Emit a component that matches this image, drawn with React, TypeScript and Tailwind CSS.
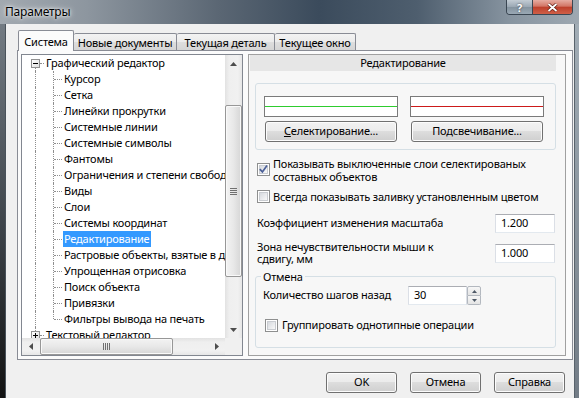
import React from 'react';

const CHILDREN = [
  'Курсор',
  'Сетка',
  'Линейки прокрутки',
  'Системные линии',
  'Системные символы',
  'Фантомы',
  'Ограничения и степени свободы',
  'Виды',
  'Слои',
  'Системы координат',
  'Редактирование',
  'Растровые объекты, взятые в документ',
  'Упрощенная отрисовка',
  'Поиск объекта',
  'Привязки',
  'Фильтры вывода на печать',
];

const dot = 'border-dotted border-[#8f8f8f]';
const btn =
  'flex items-center justify-center whitespace-nowrap rounded-[3px] border border-[#707070] bg-[linear-gradient(to_bottom,#f2f2f2_0%,#ebebeb_50%,#dddddd_50%,#cfcfcf_100%)] shadow-[inset_0_0_0_1px_#fcfcfc]';
const field =
  'flex items-center border border-[#abadb3] border-x-[#dbdfe6] border-b-[#e3e9ef] bg-white pl-[5px]';

function Arrow({ dir }: { dir: 'up' | 'down' | 'left' | 'right' }) {
  if (dir === 'up' || dir === 'down') {
    return (
      <svg width="7" height="4" viewBox="0 0 7 4">
        <path d={dir === 'up' ? 'M0 4L3.5 0L7 4Z' : 'M0 0L3.5 4L7 0Z'} fill="#4d4d4d" />
      </svg>
    );
  }
  return (
    <svg width="4" height="7" viewBox="0 0 4 7">
      <path d={dir === 'left' ? 'M4 0L0 3.5L4 7Z' : 'M0 0L4 3.5L0 7Z'} fill="#4d4d4d" />
    </svg>
  );
}

function ExpandBox({ open }: { open: boolean }) {
  return (
    <div className="flex h-[9px] w-[9px] shrink-0 items-center justify-center border border-[#919191] bg-[linear-gradient(135deg,#ffffff,#dedede)]">
      <svg width="7" height="7" viewBox="0 0 7 7">
        <rect x="1" y="3" width="5" height="1" fill="#000" />
        {!open && <rect x="3" y="1" width="1" height="5" fill="#000" />}
      </svg>
    </div>
  );
}

function CheckBox({ checked }: { checked?: boolean }) {
  return (
    <div className="flex h-[13px] w-[13px] shrink-0 items-center justify-center border border-[#8e8f8f] bg-white">
      <div className="relative flex h-[9px] w-[9px] items-center justify-center border border-[#c9ccd1] bg-[linear-gradient(135deg,#d6d9de,#f9f9f9)]">
        {checked && (
          <svg width="9" height="9" viewBox="0 0 9 9" className="overflow-visible">
            <path d="M0.8 4.2L3.4 6.9L8 0.6" fill="none" stroke="#4a5f97" strokeWidth="1.7" />
          </svg>
        )}
      </div>
    </div>
  );
}

function RootRow({ label, open, above, below }: { label: string; open: boolean; above?: boolean; below?: boolean }) {
  return (
    <div className="flex h-4 items-stretch">
      <div className="flex w-[22px] shrink-0 pl-[9px]">
        <div className="flex w-[9px] flex-col items-center">
          <div className={`h-[4px] ${above ? `border-l ${dot}` : ''}`} />
          <ExpandBox open={open} />
          <div className={`flex-1 ${below ? `border-l ${dot}` : ''}`} />
        </div>
        <div className={`mt-2 h-0 w-[4px] border-t ${dot}`} />
      </div>
      <div className="ml-px flex items-center whitespace-nowrap pl-px">{label}</div>
    </div>
  );
}

function ChildRow({ label, last, selected }: { label: string; last?: boolean; selected?: boolean }) {
  return (
    <div className="flex h-4 items-stretch">
      <div className="flex w-[22px] shrink-0 pl-[13px]">
        <div className={`border-l ${dot}`} />
      </div>
      <div className="flex w-[18px] shrink-0 pl-[9px]">
        <div className={`${last ? 'h-2' : 'h-full'} border-l ${dot}`} />
        <div className={`mt-2 h-0 w-[8px] border-t ${dot}`} />
      </div>
      <div
        className={`ml-px flex items-center whitespace-nowrap pl-px pr-[2px] ${selected ? 'bg-[#3399ff] text-white' : ''}`}
      >
        {label}
      </div>
    </div>
  );
}

function Tree() {
  return (
    <div className="flex h-[302px] w-[222px] shrink-0 flex-col border border-[#828790] bg-white">
      <div className="flex h-[283px]">
        <div className="w-[203px] overflow-hidden">
          <RootRow label="Графический редактор" open below />
          {CHILDREN.map((c, i) => (
            <ChildRow key={c} label={c} last={i === CHILDREN.length - 1} selected={c === 'Редактирование'} />
          ))}
          <RootRow label="Текстовый редактор" open={false} above />
        </div>
        {/* вертикальная прокрутка */}
        <div className="flex w-[17px] shrink-0 flex-col bg-[linear-gradient(to_right,#e2e2e2,#efefef_25%,#f1f1f1_75%,#e6e6e6)]">
          <div className="flex h-[17px] items-center justify-center">
            <Arrow dir="up" />
          </div>
          <div className="h-[33px]" />
          <div className="flex h-[172px] flex-col items-center justify-center gap-px rounded-[2px] border border-[#979797] bg-[linear-gradient(to_right,#f3f3f3,#e8e8e8_50%,#d6d6d6)] shadow-[inset_0_0_0_1px_#f9f9f9]">
            <div className="h-px w-[7px] bg-[#707070]" />
            <div className="h-px w-[7px] bg-[#707070]" />
            <div className="h-px w-[7px] bg-[#707070]" />
            <div className="h-px w-[7px] bg-[#707070]" />
          </div>
          <div className="flex-1" />
          <div className="flex h-[17px] items-center justify-center">
            <Arrow dir="down" />
          </div>
        </div>
      </div>
      {/* горизонтальная прокрутка */}
      <div className="flex h-[17px]">
        <div className="flex w-[203px] bg-[linear-gradient(to_bottom,#e2e2e2,#efefef_25%,#f1f1f1_75%,#e6e6e6)]">
          <div className="flex w-[17px] items-center justify-center">
            <Arrow dir="left" />
          </div>
          <div className="ml-px flex w-[133px] items-center justify-center gap-px rounded-[2px] border border-[#979797] bg-[linear-gradient(to_bottom,#f3f3f3,#e8e8e8_50%,#d6d6d6)] shadow-[inset_0_0_0_1px_#f9f9f9]">
            <div className="h-[7px] w-px bg-[#707070]" />
            <div className="h-[7px] w-px bg-[#707070]" />
            <div className="h-[7px] w-px bg-[#707070]" />
            <div className="h-[7px] w-px bg-[#707070]" />
          </div>
          <div className="flex-1" />
          <div className="flex w-[17px] items-center justify-center">
            <Arrow dir="right" />
          </div>
        </div>
        <div className="w-[17px] bg-[#f0f0f0]" />
      </div>
    </div>
  );
}

function EditPanel() {
  return (
    <div className="flex h-[302px] w-[318px] shrink-0 flex-col whitespace-nowrap border border-[#a0a0a0] bg-[#f7f7f7]">
      <div className="ml-px mr-[9px] flex h-4 items-center justify-center bg-[#e6e6e6]">Редактирование</div>

      {/* цвета */}
      <div className="ml-[6px] mt-[12px] flex w-[301px] gap-[12px] rounded-[3px] border border-[#d5dfe5] pb-[7px] pl-[8px] pt-[12px]">
        <div className="flex w-[134px] flex-col items-center">
          <div className="flex h-[21px] w-full items-center border border-[#7a7a7a] bg-white">
            <div className="h-px w-full bg-[#2ecc2e]" />
          </div>
          <div className={`${btn} mt-[4px] h-[21px] w-[132px]`}>
            <span>
              <span className="underline">С</span>електирование...
            </span>
          </div>
        </div>
        <div className="flex w-[134px] flex-col items-center">
          <div className="flex h-[21px] w-full items-center border border-[#7a7a7a] bg-white">
            <div className="h-px w-full bg-[#cc1a1a]" />
          </div>
          <div className={`${btn} mt-[4px] h-[21px] w-[132px]`}>Подсвечивание...</div>
        </div>
      </div>

      <div className="ml-[8px] mt-[7px] flex gap-[3px] leading-[13px]">
        <div className="mt-[6px]">
          <CheckBox checked />
        </div>
        <div>
          Показывать выключенные слои селектированых
          <br />
          составных объектов
        </div>
      </div>

      <div className="ml-[8px] mt-[7px] flex items-center gap-[3px] leading-[13px]">
        <CheckBox />
        <div>Всегда показывать заливку установленным цветом</div>
      </div>

      <div className="mt-[11px] flex items-center justify-between pl-[8px] pr-[10px]">
        <div>Коэффициент изменения масштаба</div>
        <div className={`${field} h-[19px] w-[60px]`}>1.200</div>
      </div>

      <div className="mt-[8px] flex items-center justify-between pl-[8px] pr-[10px]">
        <div className="leading-[12px]">
          Зона нечувствительности мыши к
          <br />
          сдвигу, мм
        </div>
        <div className={`${field} h-[19px] w-[60px]`}>1.000</div>
      </div>

      <fieldset className="ml-[6px] mt-[4px] w-[301px] rounded-[3px] border border-[#d5dfe5] pb-[13px]">
        <legend className="ml-[5px] px-[2px] leading-[15px]">Отмена</legend>
        <div className="mt-[2px] flex h-[19px] items-center pl-[7px]">
          <div className="w-[145px]">Количество шагов назад</div>
          <div className={`${field} h-[19px] w-[59px]`}>30</div>
          <div className="flex h-[19px] w-[14px] flex-col">
            <div className="flex flex-1 items-center justify-center rounded-t-[2px] border border-[#b3b8bf] bg-[linear-gradient(to_bottom,#f7f7f7,#e4e4e4)]">
              <svg width="5" height="3" viewBox="0 0 5 3">
                <path d="M0 3L2.5 0L5 3Z" fill="#4d5866" />
              </svg>
            </div>
            <div className="flex flex-1 items-center justify-center rounded-b-[2px] border border-t-0 border-[#b3b8bf] bg-[linear-gradient(to_bottom,#f7f7f7,#e4e4e4)]">
              <svg width="5" height="3" viewBox="0 0 5 3">
                <path d="M0 0L2.5 3L5 0Z" fill="#4d5866" />
              </svg>
            </div>
          </div>
        </div>
        <div className="ml-[9px] mt-[12px] flex items-center gap-[4px]">
          <CheckBox />
          <div>Группировать однотипные операции</div>
        </div>
      </fieldset>
    </div>
  );
}

export default function App() {
  return (
    <div className="h-[398px] w-[579px] overflow-hidden font-['Noto_Sans',sans-serif] text-[11px] tracking-[-0.2px] text-black">
      {/* заголовок */}
      <div className="flex h-[24px] justify-between bg-[linear-gradient(90deg,#a2a9b0_0%,#8d969f_15%,#5a6673_38%,#3b4b5c_55%,#4e5e6e_72%,#8794a0_88%,#9ea8b1_100%)]">
        <div className="self-center pl-[5px] text-[12px] [text-shadow:0_0_6px_#ffffff,0_0_3px_#ffffff]">Параметры</div>
        <div className="mr-[6px] flex h-[15px] self-start overflow-hidden rounded-b-[4px] border border-t-0 border-[#3a4652]">
          <div className="flex w-[25px] items-center justify-center bg-[linear-gradient(to_bottom,#c3ccd4,#9aa7b3_50%,#84939f_50%,#9aa8b4)] text-[11px] font-bold leading-none text-white [text-shadow:0_0_2px_#333]">
            ?
          </div>
          <div className="flex w-[40px] items-center justify-center border-l border-[#3a4652] bg-[linear-gradient(to_bottom,#e6aca2,#d27565_45%,#bd3f2b_50%,#cf5f47)]">
            <svg width="11" height="9" viewBox="0 0 11 9">
              <path d="M1.5 1L9.5 8M9.5 1L1.5 8" stroke="#5a1a10" strokeWidth="3.2" />
              <path d="M1.5 1L9.5 8M9.5 1L1.5 8" stroke="#ffffff" strokeWidth="1.8" />
            </svg>
          </div>
        </div>
      </div>

      <div className="flex h-[374px]">
        <div className="w-[6px] border-r border-[#4a535b] bg-[linear-gradient(to_bottom,#737b83,#3d4349_55%,#121212)]" />
        <div className="flex w-[568px] flex-col bg-[#f0f0f0]">
          <div className="pl-[11px] pt-[6px]">
            {/* вкладки */}
            <div className="flex h-[20px] items-end whitespace-nowrap pl-px">
              <div className="relative z-10 -mb-px flex h-[21px] w-[56px] justify-center rounded-t-[2px] border-x border-t border-[#898c95] bg-[#fbfbfb] pt-[3px]">
                Система
              </div>
              {[
                ['Новые документы', 'w-[103px]'],
                ['Текущая деталь', 'w-[98px]'],
                ['Текущее окно', 'w-[81px]'],
              ].map(([t, w]) => (
                <div
                  key={t}
                  className={`flex h-[17px] ${w} justify-center rounded-t-[2px] border-r border-t border-[#898c95] bg-[linear-gradient(to_bottom,#f3f3f3,#ebebeb_50%,#dedede_50%,#d5d5d5)] pt-px`}
                >
                  {t}
                </div>
              ))}
            </div>
            {/* страница */}
            <div className="flex h-[310px] w-[556px] items-start gap-[5px] border border-[#898c95] bg-[#fbfbfb] pl-[3px] pt-[3px]">
              <Tree />
              <EditPanel />
            </div>
          </div>
          <div className="mt-[12px] flex justify-end gap-[13px] pr-[9px]">
            <div className={`${btn} h-[21px] w-[71px]`}>OK</div>
            <div className={`${btn} h-[21px] w-[71px]`}>Отмена</div>
            <div className={`${btn} h-[21px] w-[71px]`}>Справка</div>
          </div>
        </div>
        <div className="w-[5px] border-l border-[#59636c] bg-[linear-gradient(to_bottom,#a2adb6,#727c86)]" />
      </div>
    </div>
  );
}
